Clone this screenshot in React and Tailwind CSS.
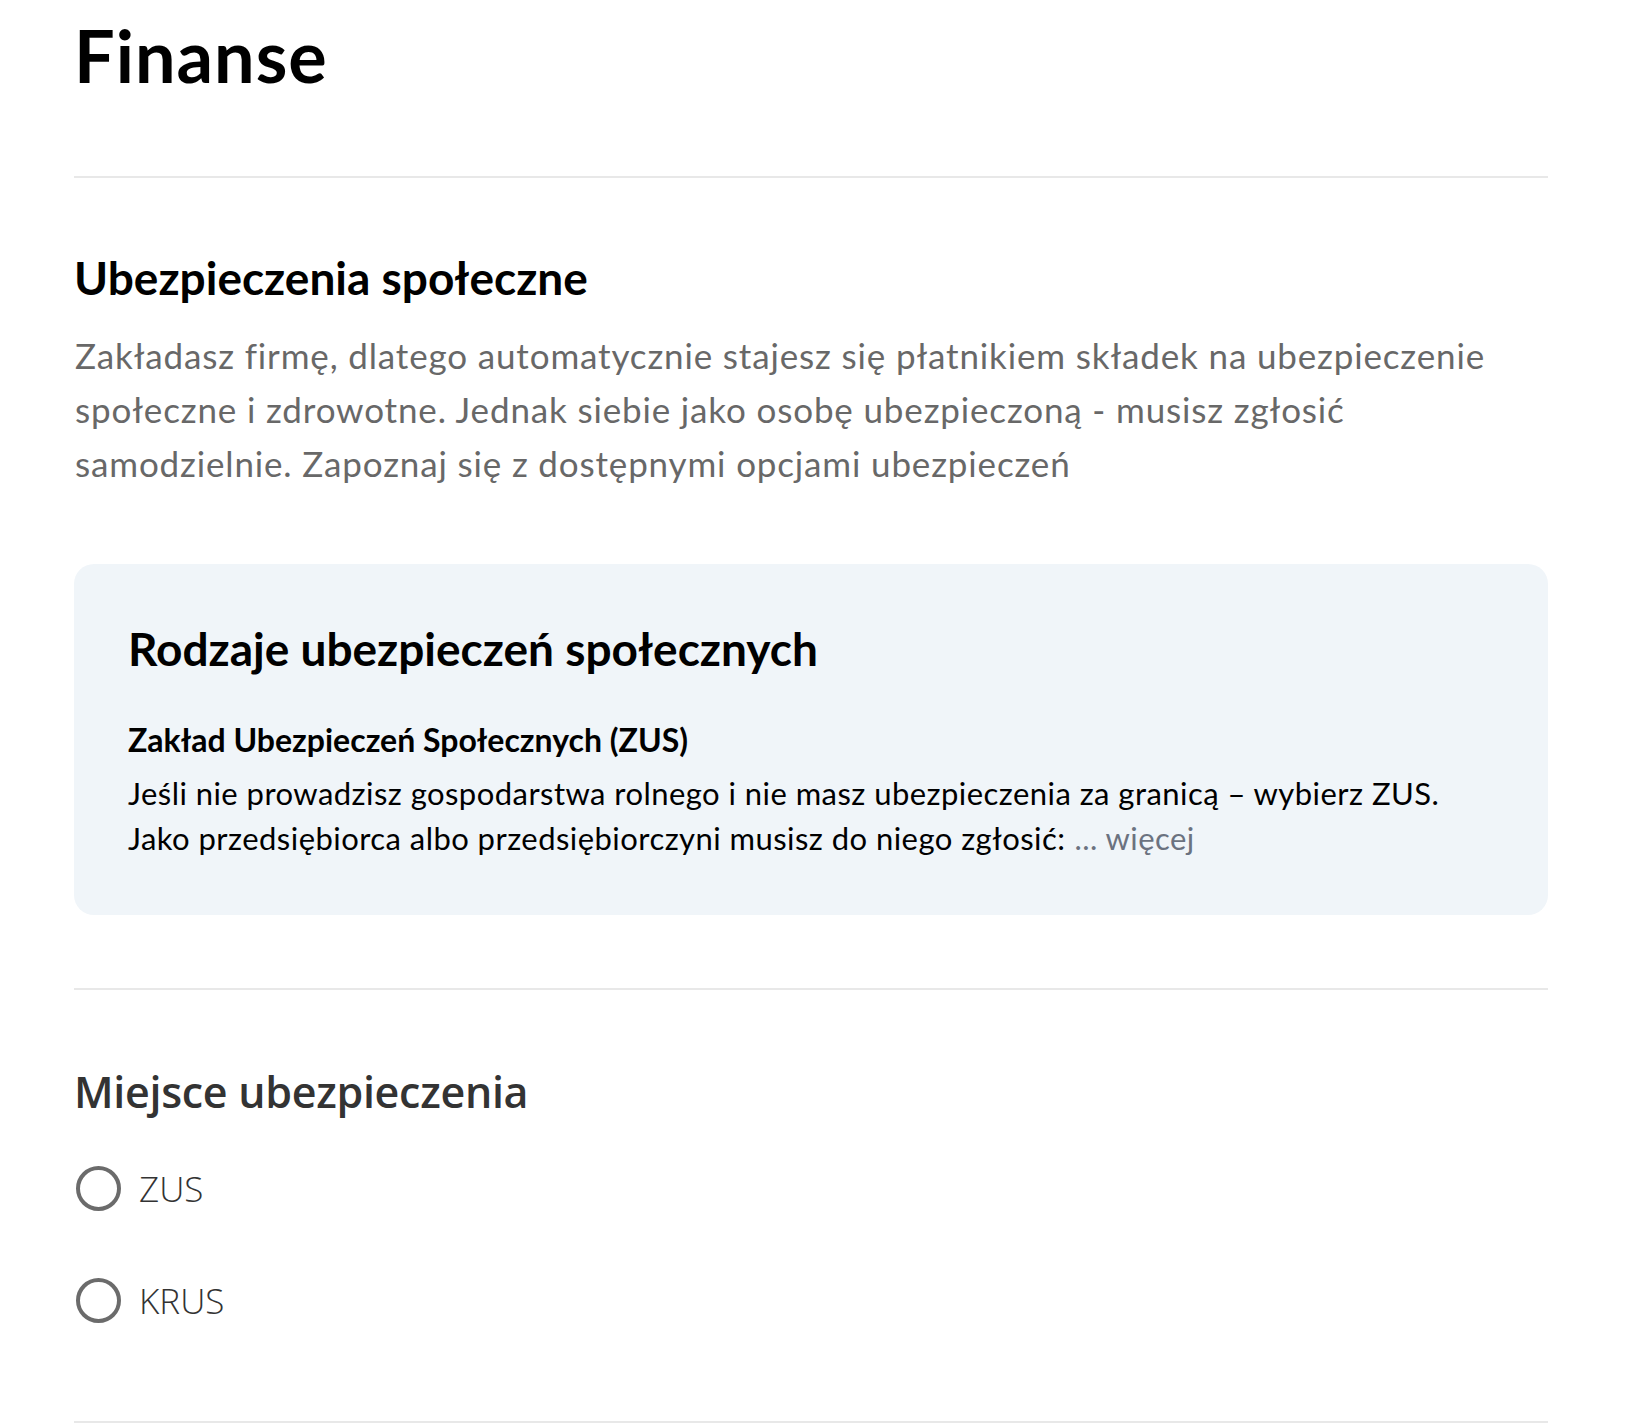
import React, { useState } from "react";

const ingFont = { fontFamily: "Lato, 'Noto Sans', sans-serif" };

// Single radio option row
const RadioOption = ({ label, value, checked, onChange }) => (
  <label className="ml-[2px] flex items-center gap-[18px] h-[45px] cursor-pointer">
    <input
      type="radio"
      name="miejsce"
      value={value}
      checked={checked}
      onChange={onChange}
      className="sr-only"
    />
    <span className="w-[45px] h-[45px] rounded-full border-[4px] border-[#6b6b6b] flex items-center justify-center shrink-0">
      {checked && <span className="w-[21px] h-[21px] rounded-full bg-[#ff6200]" />}
    </span>
    <span className="font-['Open_Sans',sans-serif] font-light text-[35px] leading-[45px] text-[#333333]">
      {label}
    </span>
  </label>
);

const App = () => {
  const [place, setPlace] = useState("");

  return (
    <div className="min-h-screen bg-white pl-[74px] pr-[88px]">
      <div className="w-[1474px]" style={ingFont}>
        {/* Page title */}
        <h1 className="pt-[19px] text-[72px] leading-[72px] font-bold tracking-[1px] text-black">Finanse</h1>

        <hr className="mt-[85px] border-0 h-[2px] bg-[#e8e8e8]" />

        {/* Intro section */}
        <section>
          <h2 className="mt-[72px] text-[46px] leading-[56px] font-bold text-black">
            Ubezpieczenia społeczne
          </h2>
          <p className="mt-[22px] pl-px text-[35px] leading-[54px] tracking-[0.85px] text-[#686868] max-w-[1445px]">
            Zakładasz firmę, dlatego automatycznie stajesz się płatnikiem składek na ubezpieczenie
            społeczne i zdrowotne. Jednak siebie jako osobę ubezpieczoną - musisz zgłosić
            samodzielnie. Zapoznaj się z dostępnymi opcjami ubezpieczeń
          </p>

          {/* Info card */}
          <div className="mt-[74px] rounded-[20px] bg-[#f0f5f9] pl-[54px] pr-[57px] pt-[59px] pb-[54px]">
            <h3 className="text-[46px] leading-[52px] font-bold text-black">
              Rodzaje ubezpieczeń społecznych
            </h3>
            <h4 className="mt-[45px] text-[32px] leading-[40px] font-bold text-black">
              Zakład Ubezpieczeń Społecznych (ZUS)
            </h4>
            <p className="mt-[11px] text-[31px] leading-[45px] tracking-[0.45px] text-black max-w-[1340px]">
              Jeśli nie prowadzisz gospodarstwa rolnego i nie masz ubezpieczenia za granicą – wybierz ZUS.
              Jako przedsiębiorca albo przedsiębiorczyni musisz do niego zgłosić:
              <a href="#wiecej" className="ml-[9px] text-[#6b7280]">
                ... więcej
              </a>
            </p>
          </div>
        </section>

        <hr className="mt-[73px] border-0 h-[2px] bg-[#e8e8e8]" />

        {/* Insurance place choice */}
        <section>
          <h2 className="mt-[76px] font-['Open_Sans',sans-serif] text-[43px] leading-[52px] font-semibold tracking-[-0.3px] text-[#333333]">
            Miejsce ubezpieczenia
          </h2>
          <div className="mt-[48px] flex flex-col gap-[67px]">
            <RadioOption
              label="ZUS"
              value="zus"
              checked={place === "zus"}
              onChange={() => setPlace("zus")}
            />
            <RadioOption
              label="KRUS"
              value="krus"
              checked={place === "krus"}
              onChange={() => setPlace("krus")}
            />
          </div>
        </section>

        <hr className="mt-[98px] border-0 h-[2px] bg-[#e8e8e8]" />
      </div>
    </div>
  );
};

export default App;
